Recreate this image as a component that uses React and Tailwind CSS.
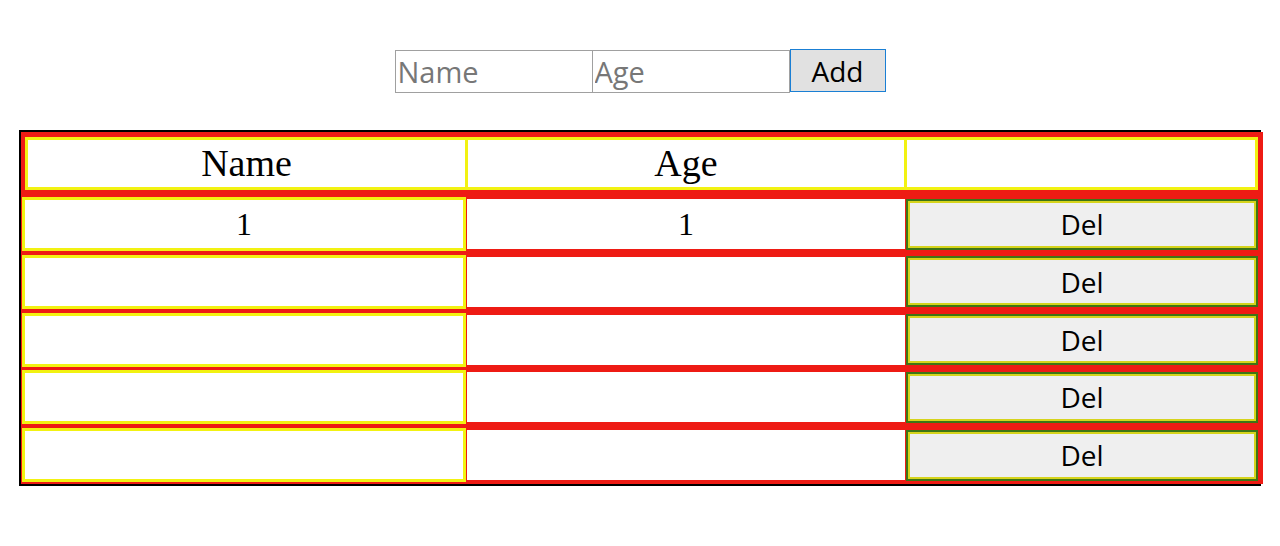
import { useState } from "react";

const RED = "bg-[#ee1b14]";

function App() {
  const [rows] = useState([
    { id: 1, name: "1", age: "1" },
    { id: 2, name: "", age: "" },
    { id: 3, name: "", age: "" },
    { id: 4, name: "", age: "" },
    { id: 5, name: "", age: "" },
  ]);

  return (
    <div className="min-h-[546px] bg-white pt-[49px]">
      {/* add form */}
      <div className="flex justify-center">
        <input
          placeholder="Name"
          className="w-[197px] h-[43px] mt-[1px] border border-r-0 border-[#a0a0a0] px-[2px] text-[29px] text-black placeholder:text-[#777] outline-none"
          style={{ fontFamily: '"Open Sans", sans-serif' }}
        />
        <input
          placeholder="Age"
          className="w-[198px] h-[43px] mt-[1px] border border-[#a0a0a0] px-[2px] text-[29px] text-black placeholder:text-[#777] outline-none"
          style={{ fontFamily: '"Open Sans", sans-serif' }}
        />
        <button
          className="w-[96px] h-[43px] border border-[#1a7fd4] bg-[#e1e1e1] text-[28px] leading-none text-black"
          style={{ fontFamily: '"Open Sans", sans-serif' }}
        >
          Add
        </button>
      </div>

      {/* table: black frame on three sides, red body runs 2px past it on the right */}
      <div className="mt-[37px] ml-[19px] w-[1242px] border-l-2 border-t-2 border-b-2 border-black">
        <div className={`${RED} w-[1242px] pt-[5px] pb-[2px]`}>
          {/* header */}
          <div
            className="ml-[4px] mr-[5px] h-[53px] flex border-[3px] border-[#f2f212] bg-white text-[38px] text-black"
            style={{ fontFamily: '"Liberation Serif", serif' }}
          >
            <div className="w-[437px] flex items-center justify-center">Name</div>
            <div className="w-[439px] border-l-[3px] border-[#f2f212] flex items-center justify-center">Age</div>
            <div className="flex-1 border-l-[3px] border-[#f2f212]"></div>
          </div>

          {/* body */}
          <div className="mt-[7px] ml-[1px] mr-[5px] flex flex-col gap-[3.75px]">
            {rows.map((r) => (
              <div key={r.id} className="h-[54px] flex items-center">
                <div
                  className="w-[444px] h-full border-[3px] border-[#f2f212] bg-white flex items-center justify-center text-[32px] text-black"
                  style={{ fontFamily: '"Liberation Serif", serif' }}
                >
                  {r.name}
                </div>
                <div
                  className="ml-[1px] w-[438px] h-[50px] bg-white flex items-center justify-center text-[32px] text-black"
                  style={{ fontFamily: '"Liberation Serif", serif' }}
                >
                  {r.age}
                </div>
                <button
                  className="ml-[1px] w-[352px] h-[51px] border-2 border-[#3d7416] shadow-[inset_0_0_0_2px_#d6d41c] bg-[#efefef] text-[28px] leading-none text-black"
                  style={{ fontFamily: '"Open Sans", sans-serif' }}
                >
                  Del
                </button>
              </div>
            ))}
          </div>
        </div>
      </div>
    </div>
  );
}

export default App;
